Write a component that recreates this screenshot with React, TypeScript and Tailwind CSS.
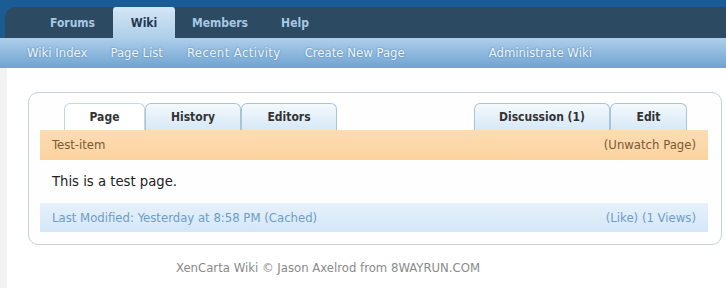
import React from "react";

const font = "font-['DejaVu_Sans_Condensed','DejaVu_Sans',Tahoma,sans-serif]";

function Tab({ label, active, w }: { label: string; active?: boolean; w: string }) {
  return (
    <div
      className={`${w} h-[27px] flex items-center justify-center rounded-t-[6px] border border-b-0 text-[12px] font-bold text-[#333] ${
        active
          ? "bg-white border-[#c5d6e3]"
          : "bg-gradient-to-b from-[#f4f9fd] to-[#d6e8f6] border-[#a9c4d9]"
      }`}
    >
      {label}
    </div>
  );
}

export default function App() {
  return (
    <div className={`w-[726px] h-[300px] overflow-hidden bg-white ${font}`}>
      {/* header */}
      <div className="bg-gradient-to-b from-[#1a5c96] to-[#1f5a8a] pt-[7px] pl-[5px]">
        <div className="h-[31px] bg-[#2c4a62] rounded-tl-[10px] flex items-stretch pl-[27px] text-[12px] font-bold">
          <div className="w-[81px] flex items-center justify-center text-[#a9c8e2]">Forums</div>
          <div className="w-[62px] flex items-center justify-center text-[#1f3a52] bg-gradient-to-b from-[#d3e6f5] to-[#aecfea] rounded-t-[3px]">
            Wiki
          </div>
          <div className="w-[90px] flex items-center justify-center text-[#a9c8e2]">Members</div>
          <div className="w-[60px] flex items-center justify-center text-[#a9c8e2]">Help</div>
        </div>
        <div className="h-[30px] bg-gradient-to-b from-[#aecfea] to-[#6fa3d1] flex items-center text-[13px] text-[#eef5fb] [text-shadow:0_0_2px_#4a7aa6] -ml-[5px] pl-[27px]">
          <span>Wiki Index</span>
          <span className="ml-[23px]">Page List</span>
          <span className="ml-[24px] tracking-[0.4px]">Recent Activity</span>
          <span className="ml-[24px]">Create New Page</span>
          <span className="ml-[84px]">Administrate Wiki</span>
        </div>
      </div>

      {/* body */}
      <div className="h-[220px] border-l-[7px] border-[#f3f3f3] pt-[24px] pl-[21px]">
        <div className="w-[694px] h-[153px] border border-[#c4d3de] rounded-[10px] bg-[#fefefe] pt-[10px] pl-[11px] pr-[13px]">
          <div className="flex pl-[24px] pr-[21px]">
            <Tab label="Page" active w="w-[81px]" />
            <Tab label="History" w="w-[96px]" />
            <Tab label="Editors" w="w-[96px]" />
            <div className="flex-1" />
            <Tab label="Discussion (1)" w="w-[136px]" />
            <Tab label="Edit" w="w-[77px]" />
          </div>
          <div className="h-[30px] bg-gradient-to-b from-[#fddcb3] to-[#fbd39f] flex items-center justify-between px-3 text-[13px] text-[#7a5a34]">
            <span>Test-item</span>
            <span>(Unwatch Page)</span>
          </div>
          <div className="h-[43px] flex items-center px-3 text-[14.7px] text-[#222]">This is a test page.</div>
          <div className="h-[29px] bg-gradient-to-b from-[#e6f1fb] to-[#d3e7f7] flex items-center justify-between px-3 text-[13px] text-[#6f9cc4]">
            <span>Last Modified: Yesterday at 8:58 PM (Cached)</span>
            <span>(Like) (1 Views)</span>
          </div>
        </div>
        <div className="w-[694px] mt-[13px] text-center text-[13px] text-[#8a8a8a] pr-[94px]">
          XenCarta Wiki © Jason Axelrod from 8WAYRUN.COM
        </div>
      </div>
    </div>
  );
}
